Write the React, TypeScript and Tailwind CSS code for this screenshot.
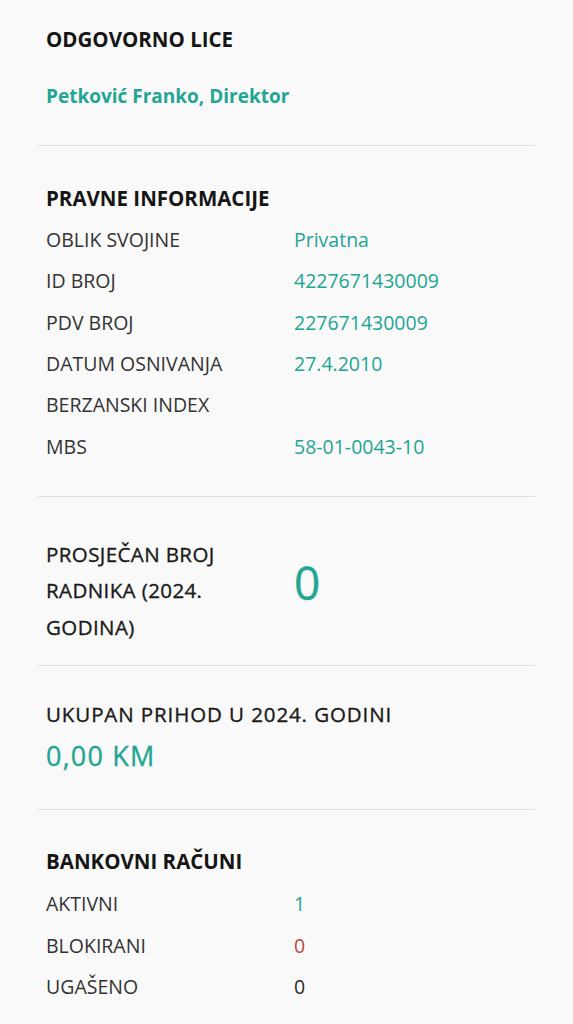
const TEAL = 'text-[#23a593]';

type Row = { label: string; value: string; tone?: string };

const pravne: Row[] = [
  { label: 'OBLIK SVOJINE', value: 'Privatna' },
  { label: 'ID BROJ', value: '4227671430009' },
  { label: 'PDV BROJ', value: '227671430009' },
  { label: 'DATUM OSNIVANJA', value: '27.4.2010' },
  { label: 'BERZANSKI INDEX', value: '' },
  { label: 'MBS', value: '58-01-0043-10' },
];

const racuni: Row[] = [
  { label: 'AKTIVNI', value: '1' },
  { label: 'BLOKIRANI', value: '0', tone: 'text-[#c0413b]' },
  { label: 'UGAŠENO', value: '0', tone: 'text-[#2a2a2a]' },
];

// medium weight: the installed Open Sans jumps from regular to bold
const MEDIUM = '[-webkit-text-stroke:0.35px_currentColor]';

function Heading({ children }: { children: React.ReactNode }) {
  return <h2 className="text-[20.5px] leading-[28px] font-bold text-[#151515]">{children}</h2>;
}

function InfoRows({ rows }: { rows: Row[] }) {
  return (
    <div>
      {rows.map((r) => (
        <div key={r.label} className="grid grid-cols-[248px_1fr] h-[41.3px] items-center text-[19.5px]">
          <span className="text-[#333333]">{r.label}</span>
          <span className={r.tone ?? TEAL}>{r.value}</span>
        </div>
      ))}
    </div>
  );
}

export default function App() {
  return (
    <div className="min-h-screen bg-[#f9f9f9]" style={{ fontFamily: '"Open Sans", "Noto Sans", sans-serif' }}>
      <div className="mx-[38px] divide-y divide-[#dedede]">
        <section className="pl-[8px] pt-[25px] pb-[35px]">
          <Heading>ODGOVORNO LICE</Heading>
          <p className={`mt-[29px] text-[19px] leading-[28px] font-bold ${TEAL}`}>Petković Franko, Direktor</p>
        </section>

        <section className="pl-[8px] pt-[38px] pb-[29px]">
          <Heading>PRAVNE INFORMACIJE</Heading>
          <div className="mt-[7px]">
            <InfoRows rows={pravne} />
          </div>
        </section>

        <section className="pl-[8px] pt-[39px] pb-[20px]">
          <div className="grid grid-cols-[248px_1fr] items-center">
            <p className={`w-[220px] text-[20.5px] leading-[36.5px] tracking-[0.4px] text-[#1a1a1a] ${MEDIUM}`}>
              PROSJEČAN BROJ RADNIKA (2024. GODINA)
            </p>
            <span className={`mb-[18px] text-[46px] leading-none ${TEAL} ${MEDIUM}`}>0</span>
          </div>
        </section>

        <section className="pl-[8px] pt-[34px] pb-[35px]">
          <p className={`text-[20.5px] leading-[28px] tracking-[0.9px] text-[#1a1a1a] ${MEDIUM}`}>UKUPAN PRIHOD U 2024. GODINI</p>
          <p className={`mt-[10px] text-[27px] leading-[36px] tracking-[1.2px] ${TEAL} ${MEDIUM}`}>0,00 KM</p>
        </section>

        <section className="pl-[8px] pt-[37px] pb-[30px]">
          <Heading>BANKOVNI RAČUNI</Heading>
          <div className="mt-[8px]">
            <InfoRows rows={racuni} />
          </div>
        </section>
      </div>
    </div>
  );
}
